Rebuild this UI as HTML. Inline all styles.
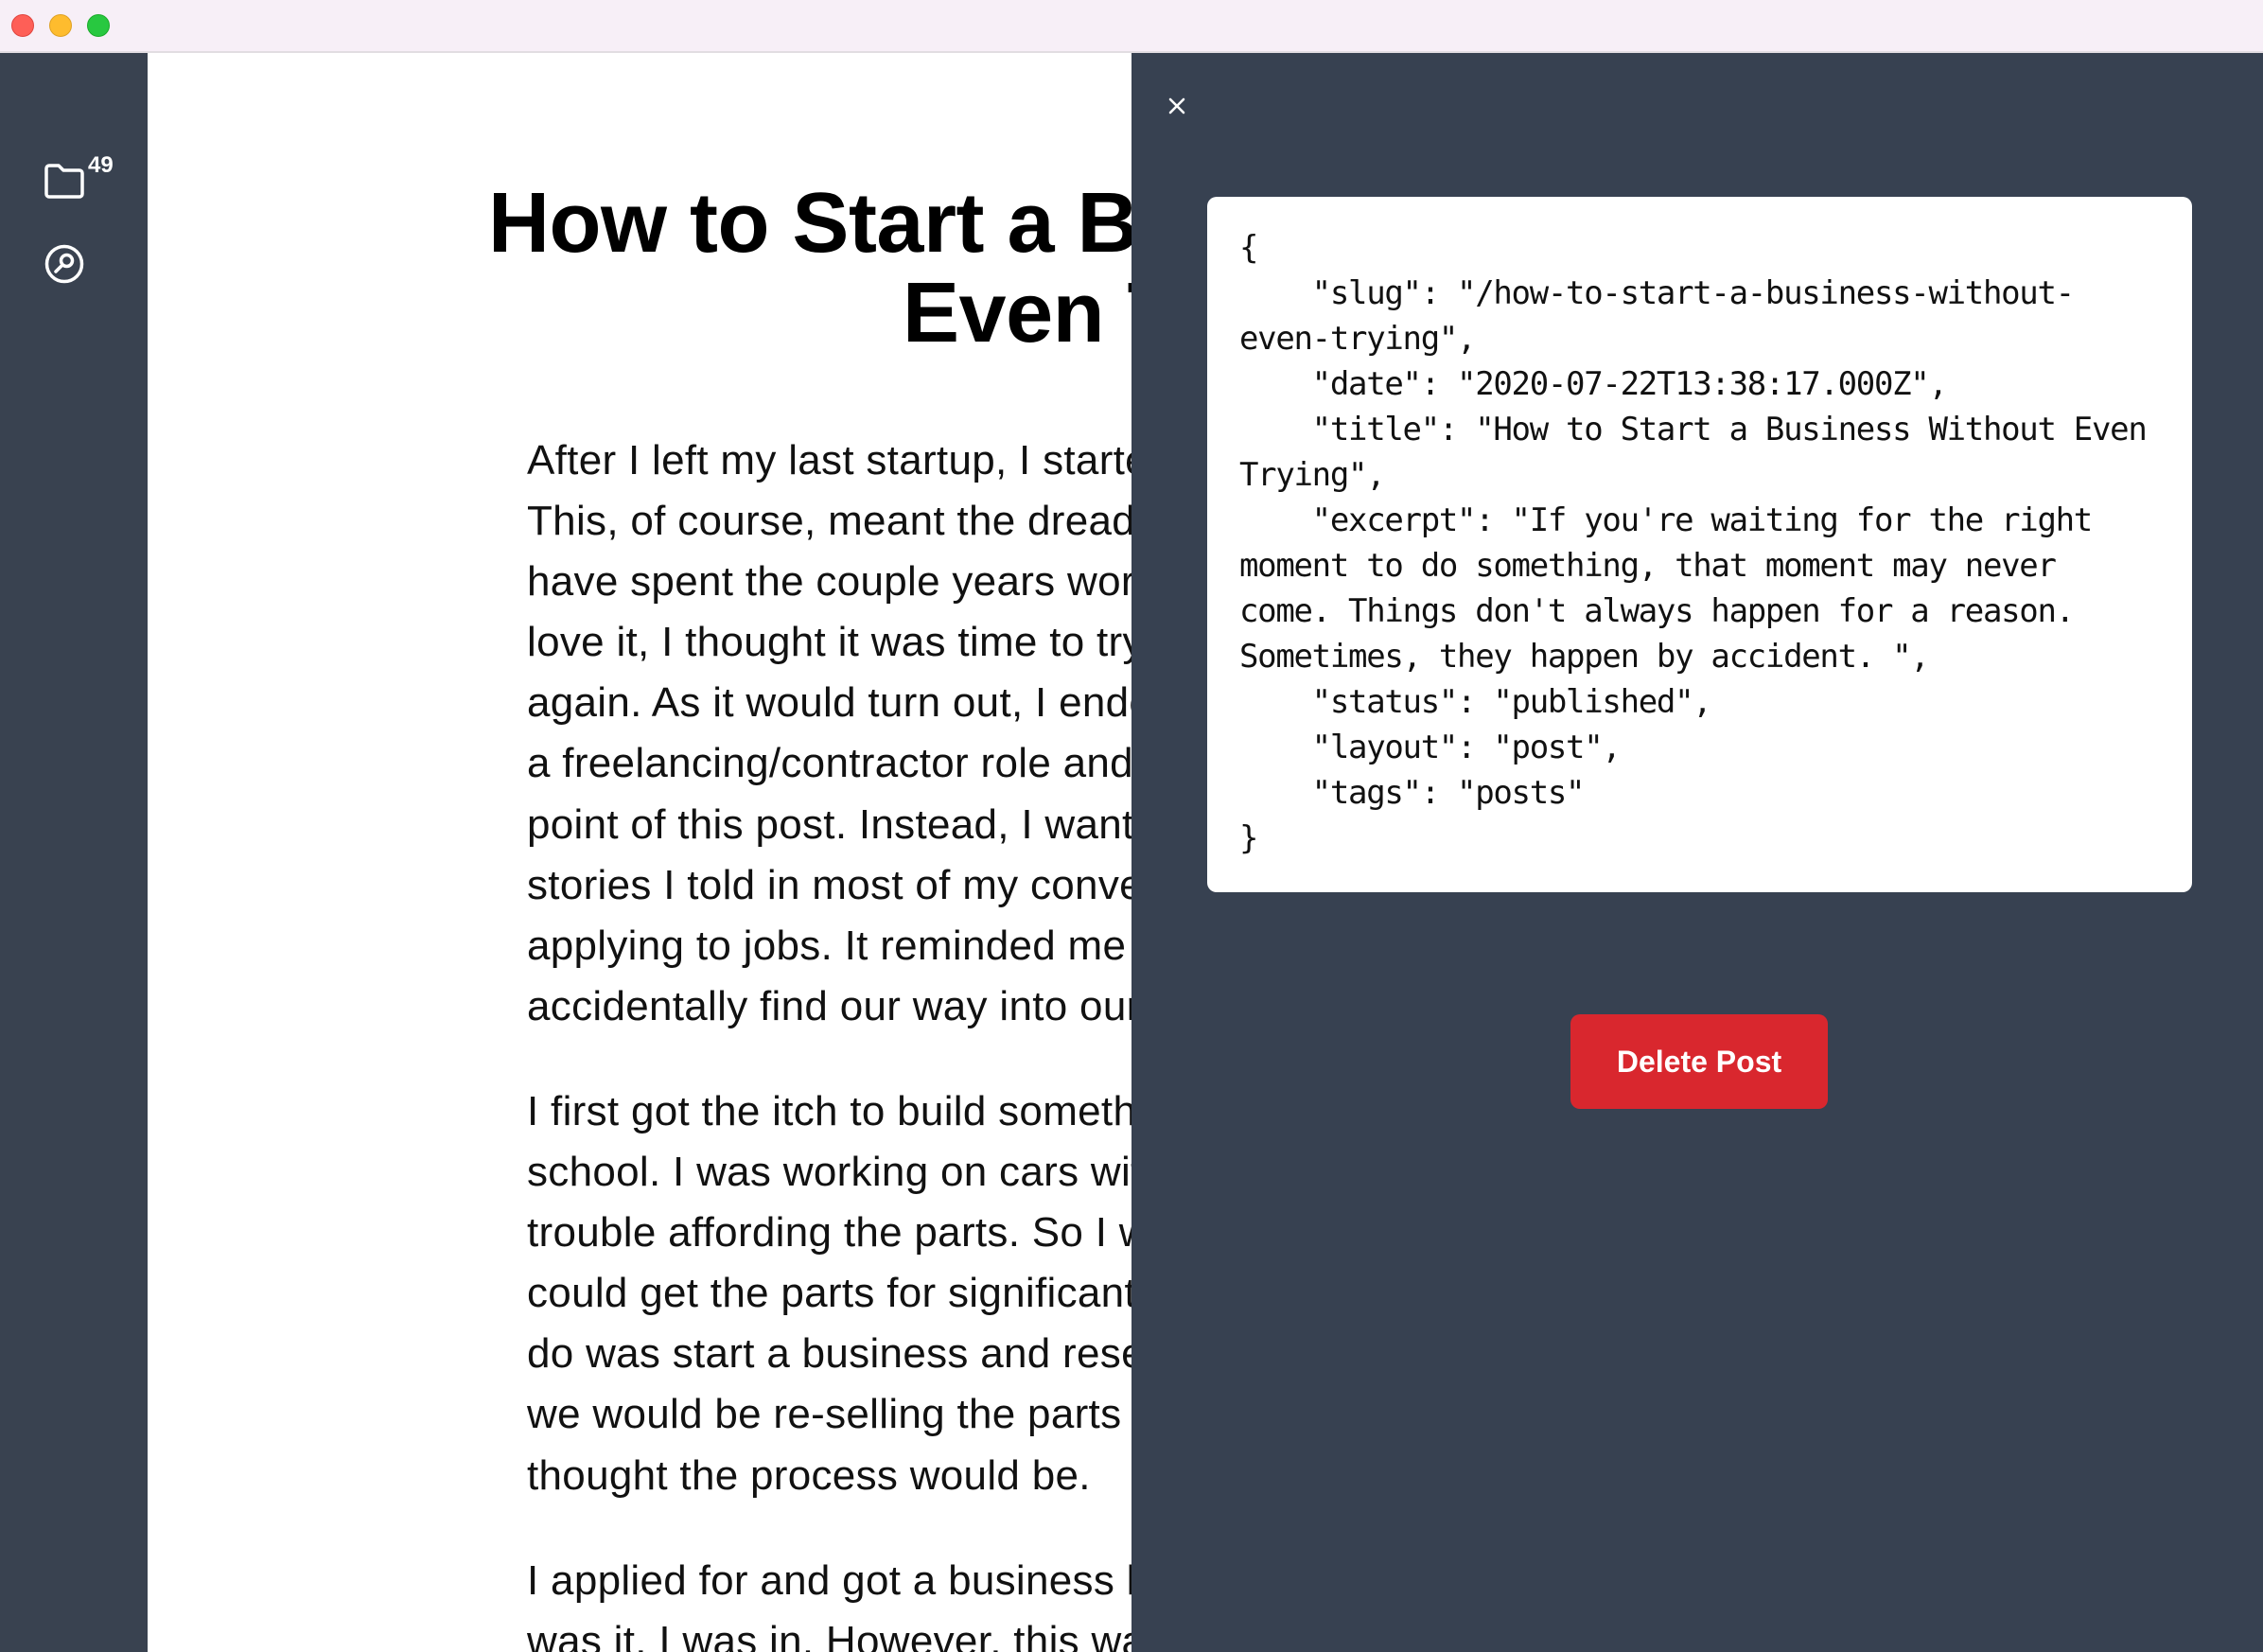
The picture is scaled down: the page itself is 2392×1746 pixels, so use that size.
<!DOCTYPE html>
<html><head><style>
*{margin:0;padding:0;box-sizing:border-box}
html,body{width:2392px;height:1746px;overflow:hidden;background:#fff;font-family:"Liberation Sans",sans-serif}
.tb{position:absolute;left:0;top:0;width:2392px;height:56px;background:#f7eff7;border-bottom:2px solid #e2dde2}
.dot{position:absolute;top:15px;width:24px;height:24px;border-radius:50%}
.side{position:absolute;left:0;top:56px;width:156px;height:1690px;background:#394250}
.main{position:absolute;left:156px;top:56px;width:1040px;height:1690px;background:#fff;overflow:hidden}
.t{position:absolute;font-weight:bold;font-size:90px;letter-spacing:-0.5px;color:#000;white-space:nowrap;line-height:1}
.p{position:absolute;left:401px;font-size:44px;letter-spacing:0.3px;line-height:64.1px;color:#111;white-space:nowrap}
.panel{position:absolute;left:1196px;top:56px;width:1196px;height:1690px;background:#374151}
.card{position:absolute;left:80px;top:152px;width:1041px;height:735px;background:#fff;border-radius:10px}
pre{position:absolute;left:34px;top:30px;font-family:"DejaVu Sans Mono","Liberation Mono",monospace;font-size:34px;letter-spacing:-1.3px;line-height:48px;color:#111}
.btn{position:absolute;left:464px;top:1016px;width:272px;height:100px;background:#d9272e;border-radius:10px;color:#fff;font-size:32px;font-weight:bold;text-align:center;line-height:100px}
</style></head><body>
<div class="tb">
<div class="dot" style="left:12px;background:#fe5f57;border:1px solid #e0443e"></div>
<div class="dot" style="left:52px;background:#febc2e;border:1px solid #dea123"></div>
<div class="dot" style="left:92px;background:#28c840;border:1px solid #1aab29"></div>
</div>
<div class="side">
<svg style="position:absolute;left:46px;top:117px" width="46" height="38" viewBox="0 0 46 38" fill="none" stroke="#fff" stroke-width="3.5" stroke-linejoin="round"><path d="M3 5a3 3 0 0 1 3-3h10l5 5h17a3 3 0 0 1 3 3v22a3 3 0 0 1-3 3H6a3 3 0 0 1-3-3z"/></svg>
<div style="position:absolute;left:93px;top:105px;color:#fff;font-size:24px;font-weight:bold">49</div>
<svg style="position:absolute;left:46px;top:201px" width="44" height="44" viewBox="0 0 44 44" fill="none" stroke="#fff" stroke-width="3.5" stroke-linecap="round"><circle cx="22" cy="22" r="18.5"/><circle cx="24.5" cy="18.5" r="6"/><path d="M20 23l-7 7"/></svg>
</div>
<div class="main">
<div class="t" style="left:360px;top:135px">How to Start a Business Without</div>
<div class="t" style="left:798px;top:230px">Even Trying</div>
<div class="p" style="top:399px">After I left my last startup, I started looking for a new job.<br>This, of course, meant the dreaded interview process. I<br>have spent the couple years working at startups and I<br>love it, I thought it was time to try something new<br>again. As it would turn out, I ended up taking<br>a freelancing/contractor role and that isn't the<br>point of this post. Instead, I wanted to share<br>stories I told in most of my conversations while<br>applying to jobs. It reminded me how we sometimes<br>accidentally find our way into our careers.</div>
<div class="p" style="top:1087px">I first got the itch to build something in high<br>school. I was working on cars with friends and we had<br>trouble affording the parts. So I wondered if we<br>could get the parts for significantly cheaper. All I had to<br>do was start a business and resell them. Of course<br>we would be re-selling the parts to ourselves. I<br>thought the process would be.</div>
<div class="p" style="top:1583px">I applied for and got a business license and that<br>was it. I was in. However, this wasn't the end.</div>
</div>
<div class="panel">
<svg style="position:absolute;left:38px;top:46px" width="20" height="20" viewBox="0 0 20 20" stroke="#fff" stroke-width="2.6" stroke-linecap="round"><path d="M3 3l14 14M17 3L3 17"/></svg>
<div class="card"><pre>{
    "slug": "/how-to-start-a-business-without-
even-trying",
    "date": "2020-07-22T13:38:17.000Z",
    "title": "How to Start a Business Without Even
Trying",
    "excerpt": "If you're waiting for the right
moment to do something, that moment may never
come. Things don't always happen for a reason.
Sometimes, they happen by accident. ",
    "status": "published",
    "layout": "post",
    "tags": "posts"
}</pre></div>
<div class="btn">Delete Post</div>
</div>
</body></html>
